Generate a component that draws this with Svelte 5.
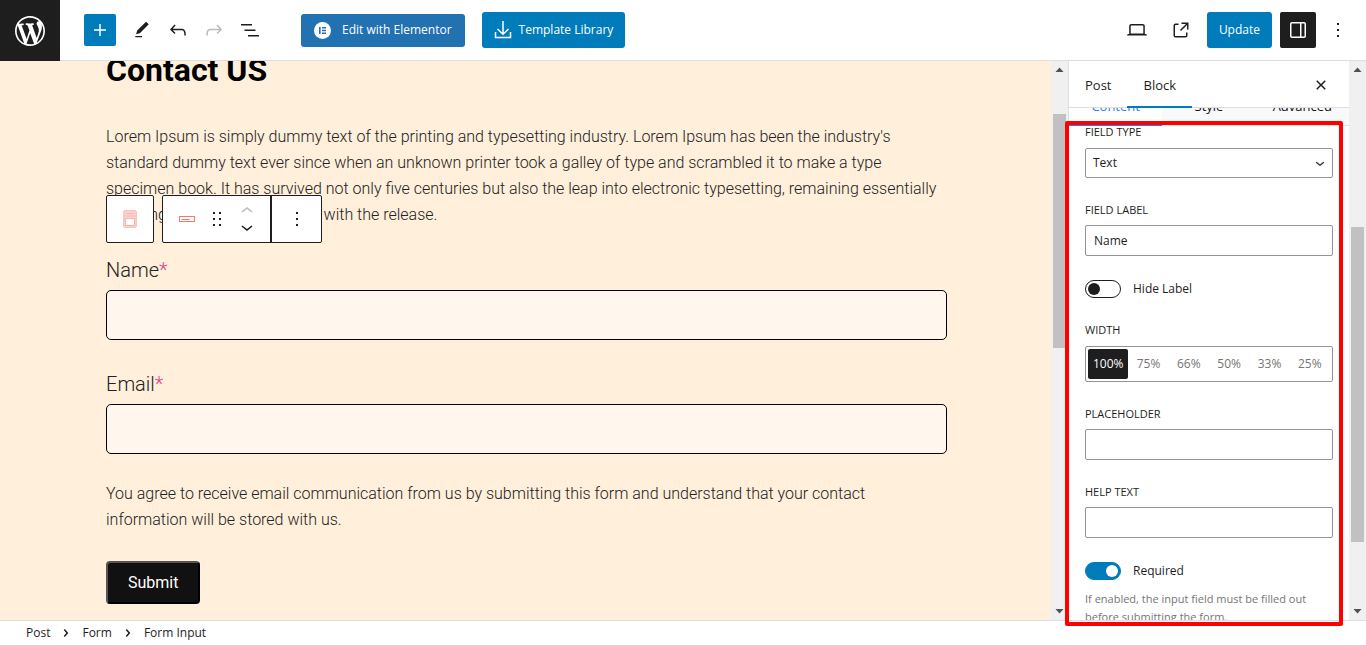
<script>
  const icons = {
    wordpress: 'M20 10c0-5.51-4.49-10-10-10C4.48 0 0 4.49 0 10c0 5.52 4.48 10 10 10 5.51 0 10-4.48 10-10zM7.78 15.37L4.37 6.22c.55-.02 1.17-.08 1.17-.08.5-.06.44-1.13-.06-1.11 0 0-1.45.11-2.37.11-.18 0-.37 0-.58-.01C4.12 2.69 6.87 1.11 10 1.11c2.33 0 4.45.87 6.05 2.34-.68-.11-1.65.39-1.65 1.58 0 .74.45 1.36.9 2.1.35.61.55 1.36.55 2.46 0 1.49-1.4 5-1.4 5l-3.03-8.37c.54-.02.82-.17.82-.17.5-.05.44-1.25-.06-1.22 0 0-1.44.12-2.38.12-.87 0-2.33-.12-2.33-.12-.5-.03-.56 1.2-.06 1.22l.92.08 1.26 3.41zM17.41 10c.24-.64.74-1.87.43-4.25.7 1.29 1.05 2.71 1.05 4.25 0 3.29-1.73 6.24-4.4 7.78.97-2.59 1.94-5.2 2.92-7.78zM6.1 18.09C3.12 16.65 1.11 13.53 1.11 10c0-1.3.23-2.48.72-3.59C3.25 10.3 4.67 14.2 6.1 18.09zm4.03-6.63l2.58 6.98c-.86.29-1.76.45-2.71.45-.79 0-1.57-.11-2.29-.33.81-2.38 1.62-4.74 2.42-7.1z',
    plus: 'M11.25 12.75V18H12.75V12.75H18V11.25H12.75V6H11.25V11.25H6V12.75H11.25Z',
    pencil: 'M20.1 5.1L16.9 2 6.2 12.7l-1.3 4.4 4.5-1.3L20.1 5.1zM4 20.8h8v-1.5H4v1.5z',
    undo: 'M18.3 11.7c-.6-.6-1.4-.9-2.3-.9H6.7l2.9-3.3-1.1-1-4.5 5L8.5 16l1-1-2.7-2.7H16c.5 0 .9.2 1.3.5 1 1 1 3.4 1 4.5v.3h1.5v-.2c0-1.5 0-4.3-1.5-5.7z',
    redo: 'M15.6 6.5l-1.1 1 2.9 3.3H8c-.9 0-1.7.3-2.3.9-1.4 1.5-1.4 4.2-1.4 5.6v.2h1.5v-.3c0-1.1 0-3.5 1-4.5.3-.3.7-.5 1.3-.5h9.2L14.5 15l1.1 1.1 4.6-4.6-4.6-5z',
    list: 'M3 6h11v1.5H3V6Zm3.5 5.5h11V13h-11v-1.5ZM21 17H10v1.5h11V17Z',
    laptop: 'M20.5 16h-.7V8c0-1.1-.9-2-2-2H6.2c-1.1 0-2 .9-2 2v8h-.7c-.8 0-1.5.7-1.5 1.5h20c0-.8-.7-1.5-1.5-1.5zM5.7 8c0-.3.2-.5.5-.5h11.6c.3 0 .5.2.5.5v7.6H5.7V8z',
    external: 'M19.5 4.5h-7V6h4.44l-5.97 5.97 1.06 1.06L18 7.06v4.44h1.5v-7Zm-13 1a2 2 0 0 0-2 2v10a2 2 0 0 0 2 2h10a2 2 0 0 0 2-2v-3H17v3a.5.5 0 0 1-.5.5h-10a.5.5 0 0 1-.5-.5v-10a.5.5 0 0 1 .5-.5h3V5.5h-3Z',
    drawer: 'M18 4H6c-1.1 0-2 .9-2 2v12c0 1.1.9 2 2 2h12c1.1 0 2-.9 2-2V6c0-1.1-.9-2-2-2zm-4 14.5H6c-.3 0-.5-.2-.5-.5V6c0-.3.2-.5.5-.5h8v13zm4.5-.5c0 .3-.2.5-.5.5h-2.5v-13H18c.3 0 .5.2.5.5v12z',
    more: 'M13 19h-2v-2h2v2zm0-6h-2v-2h2v2zm0-6h-2V5h2v2z',
    drag: 'M8 7h2V5H8v2zm0 6h2v-2H8v2zm0 6h2v-2H8v2zm6-14v2h2V5h-2zm0 8h2v-2h-2v2zm0 6h2v-2h-2v2z',
    up: 'M6.5 12.4L12 8l5.5 4.4-.9 1.2L12 10l-4.5 3.6-1-1.2z',
    down: 'M17.5 11.6L12 16l-5.5-4.4.9-1.2L12 14l4.5-3.6 1 1.2z',
    close: 'M12 13.06l3.712 3.713 1.061-1.06L13.061 12l3.712-3.712-1.06-1.06L12 10.938 8.288 7.227l-1.061 1.06L10.939 12l-3.712 3.712 1.06 1.061L12 13.061z',
    crumb: 'M10.8622 8.04053L14.2805 12.0286L10.8622 16.0167L9.72327 15.0405L12.3049 12.0286L9.72327 9.01672L10.8622 8.04053Z'
  };

  const widths = ['100%', '75%', '66%', '50%', '33%', '25%'];
  let width = $state('100%');
  let fieldLabel = $state('Name');
  let hideLabel = $state(false);
  let required = $state(true);
</script>

{#snippet icon(name, size = 24)}
  <svg width={size} height={size} viewBox={name === 'wordpress' ? '-2 -2 24 24' : '0 0 24 24'} fill="currentColor" aria-hidden="true"><path d={icons[name]} /></svg>
{/snippet}

{#snippet scrollbar(before, thumb, after)}
  <div class="scrollbar" aria-hidden="true">
    <svg width="17" height="17" viewBox="0 0 17 17"><path d="M8.5 6.5L12.5 11h-8z" fill="#505050" /></svg>
    <div style:flex-grow={before}></div>
    <div class="thumb" style:flex-grow={thumb}></div>
    <div style:flex-grow={after}></div>
    <svg width="17" height="17" viewBox="0 0 17 17"><path d="M8.5 10.5L12.5 6h-8z" fill="#505050" /></svg>
  </div>
{/snippet}

<div class="editor">
  <header>
    <a class="logo" href="#posts" aria-label="View posts">{@render icon('wordpress', 36)}</a>
    <div class="tools">
      <button class="add" aria-label="Add block">{@render icon('plus')}</button>
      <button class="tool" aria-label="Tools">{@render icon('pencil', 20)}</button>
      <button class="tool" aria-label="Undo">{@render icon('undo')}</button>
      <button class="tool" aria-label="Redo" disabled>{@render icon('redo')}</button>
      <button class="tool" aria-label="Document overview">{@render icon('list')}</button>
    </div>
    <button class="elementor">
      <svg width="17" height="17" viewBox="0 0 17 17" aria-hidden="true"><circle cx="8.5" cy="8.5" r="8.5" fill="#fff" /><path d="M5 5h1.6v7H5zM8 5h4v1.4H8zM8 7.8h4v1.4H8zM8 10.6h4V12H8z" fill="#2271b1" /></svg>
      Edit with Elementor
    </button>
    <button class="library">
      <svg width="18" height="18" viewBox="0 0 18 18" fill="none" stroke="#fff" stroke-width="1.5" aria-hidden="true"><path d="M1.5 11v5.5h15V11M9 0v13M3.5 8L9 13.2 14.5 8" /></svg>
      Template Library
    </button>
    <div class="settings">
      <button class="tool" aria-label="Preview">{@render icon('laptop')}</button>
      <button class="tool" aria-label="View post">{@render icon('external')}</button>
      <button class="update">Update</button>
      <button class="tool dark" aria-label="Settings">{@render icon('drawer')}</button>
      <button class="tool narrow" aria-label="Options">{@render icon('more')}</button>
    </div>
  </header>

  <div class="body">
    <main>
      <div class="post">
        <h1>Contact US</h1>
        <p class="intro">Lorem Ipsum is simply dummy text of the printing and typesetting industry. Lorem Ipsum has been the industry's standard dummy text ever since when an unknown printer took a galley of type and scrambled it to make a type specimen book. It has survived not only five centuries but also the leap into electronic typesetting, remaining essentially unchanged. It was popularised with the release.</p>
        <form onsubmit={(e) => e.preventDefault()}>
          <div class="toolbar" role="toolbar" aria-label="Block tools">
            <button type="button" class="parent" aria-label="Select Form">
              <svg width="14" height="18" viewBox="0 0 14 18" fill="#fdd5cf" stroke="#fbb4aa" aria-hidden="true"><rect x=".75" y=".75" width="12.5" height="16.5" rx="1" /><path d="M3 3.5h8M2 6h10" /><rect x="2.5" y="8.5" width="9" height="7" fill="#fff" /></svg>
            </button>
            <div class="group">
              <button type="button" aria-label="Form Input">
                <svg width="16" height="6" viewBox="0 0 16 6" fill="none" stroke="#ff7666" aria-hidden="true"><rect x=".5" y=".5" width="15" height="5" /><path d="M2.5 3.5h8" /></svg>
              </button>
              <button type="button" aria-label="Drag">{@render icon('drag')}</button>
              <div class="movers">
                <button type="button" aria-label="Move up" disabled>{@render icon('up')}</button>
                <button type="button" aria-label="Move down">{@render icon('down')}</button>
              </div>
              <button type="button" class="options" aria-label="Options">{@render icon('more')}</button>
            </div>
          </div>
          <div class="entry">
            <label for="name">Name<span>*</span></label>
            <input id="name" type="text" />
          </div>
          <div class="entry">
            <label for="email">Email<span>*</span></label>
            <input id="email" type="email" />
          </div>
          <p>You agree to receive email communication from us by submitting this form and understand that your contact information will be stored with us.</p>
          <button class="submit">Submit</button>
        </form>
      </div>
    </main>
    {@render scrollbar(36, 234, 255)}

    <aside>
      <div class="panel">
        <div class="tabs">
          <button>Post</button>
          <button class="current">Block</button>
          <button class="close" aria-label="Close settings">{@render icon('close')}</button>
        </div>
        <div class="scroll">
          <div class="subtabs">
            <button class="current">Content</button>
            <button>Style</button>
            <button>Advanced</button>
          </div>
          <div class="fields">
            <div class="control">
              <label for="type">FIELD TYPE</label>
              <div class="select">
                <select id="type"><option>Text</option></select>
                {@render icon('down', 18)}
              </div>
            </div>
            <div class="control text">
              <label for="field-label">FIELD LABEL</label>
              <input id="field-label" type="text" bind:value={fieldLabel} />
            </div>
            <label class="toggle"><input type="checkbox" role="switch" bind:checked={hideLabel} />Hide Label</label>
            <div class="control">
              <span class="caption" id="width-caption">WIDTH</span>
              <div class="segments" role="group" aria-labelledby="width-caption">
                {#each widths as w}
                  <button class:on={w === width} onclick={() => (width = w)}>{w}</button>
                {/each}
              </div>
            </div>
            <div class="control text">
              <label for="placeholder">PLACEHOLDER</label>
              <input id="placeholder" type="text" />
            </div>
            <div class="control text">
              <label for="help">HELP TEXT</label>
              <input id="help" type="text" />
            </div>
            <div>
              <label class="toggle"><input type="checkbox" role="switch" bind:checked={required} />Required</label>
              <p class="hint">If enabled, the input field must be filled out before submitting the form.</p>
            </div>
          </div>
        </div>
        <div class="highlight"></div>
      </div>
      {@render scrollbar(149, 315, 61)}
    </aside>
  </div>

  <footer>
    <a href="#post">Post</a>{@render icon('crumb')}<a href="#form">Form</a>{@render icon('crumb')}<a class="here" href="#input">Form Input</a>
  </footer>
</div>

<style>
  :global(body) { margin: 0; }
  * { box-sizing: border-box; }
  .editor {
    display: flex;
    flex-direction: column;
    height: 100vh;
    overflow: hidden;
    background: #fff;
    color: #1e1e1e;
    font: 12px/18px "Open Sans", "Noto Sans", sans-serif;
  }
  button, input, select { font: inherit; color: inherit; margin: 0; }
  button { display: flex; align-items: center; justify-content: center; padding: 0; border: 0; background: none; white-space: nowrap; }
  svg { display: block; flex: none; }
  p, h1 { margin: 0; }
  a { color: inherit; text-decoration: none; }

  header { display: flex; flex: none; align-items: center; height: 61px; border-bottom: 1px solid #dddee1; }
  .logo { display: flex; align-items: center; justify-content: center; align-self: flex-start; flex: none; width: 60px; height: 61px; background: #1e1e1e; color: #fff; }
  .tools { display: flex; align-items: center; margin: 0 33px 0 24px; }
  .add { width: 32px; height: 32px; margin-right: 8px; border-radius: 2px; background: #007cba; color: #fff; }
  .tool { width: 36px; height: 36px; border-radius: 2px; }
  button:disabled { color: #bbb; }
  .elementor, .library, .update { border-radius: 3px; background: #007cba; color: #fff; }
  .elementor { gap: 11px; height: 33px; padding: 0 13px; background: #2271b1; }
  .library { gap: 7px; height: 36px; margin-left: 17px; padding: 0 12px; font-weight: 500; }
  .settings { display: flex; align-items: center; gap: 8px; margin-left: auto; padding-right: 16px; }
  .update { height: 36px; padding: 0 12px; }
  .dark { background: #1e1e1e; color: #fff; }
  .narrow { width: 24px; margin-left: 2px; }

  .body { display: flex; flex: 1; min-height: 0; }
  main { flex: 1; min-width: 0; overflow: hidden; background: #ffefdb; color: #222; font: 300 16px/26px Roboto, sans-serif; }
  .post { margin-top: -10px; padding: 0 104px 0 106px; }
  h1 { margin-bottom: 35px; color: #000; font-size: 32px; line-height: 38px; font-weight: 700; }
  .intro { margin-bottom: 29px; }
  form { position: relative; }
  .entry { display: flex; flex-direction: column; gap: 7px; margin-bottom: 31px; }
  .entry label { font-size: 20px; }
  .entry span { color: #e83e8c; }
  .entry input { height: 50px; padding: 0 12px; border: 1px solid #000; border-radius: 5px; background: #fff7ee; }
  form p { margin: -4px 0 28px; }
  .submit { height: 43px; padding: 0 20px; border: 2px outset #000; border-radius: 4px; background: #111; color: #fff; font-weight: 400; }
  .toolbar { position: absolute; left: 0; bottom: 100%; display: flex; gap: 8px; margin-bottom: 14px; }
  .parent, .group { height: 48px; border: 1px solid #1e1e1e; border-radius: 2px; background: #fff; color: #1e1e1e; }
  .parent { width: 48px; }
  .group { display: flex; align-items: center; }
  .group > button { width: 24px; height: 46px; }
  .group > button:first-child { width: 42px; padding-left: 6px; }
  .group > .options { width: 51px; margin-left: 5px; border-left: 2px solid #1e1e1e; }
  .movers { width: 36px; }
  .movers button { width: 36px; height: 16px; overflow: hidden; }

  .scrollbar { display: flex; flex: none; flex-direction: column; width: 17px; background: #f0f0f0; }
  .thumb { margin: 0 2px; background: #c1c1c1; }

  aside { display: flex; flex: none; }
  .panel { position: relative; display: flex; flex-direction: column; width: 281px; border-left: 1px solid #dddee1; }
  .tabs { display: flex; flex: none; height: 47px; border-bottom: 1px solid #ddd; font-size: 13px; }
  .tabs button { height: 47px; padding: 0 16px; }
  .tabs .current { box-shadow: inset 0 -2px #007cba; }
  .tabs .close { width: 24px; margin-left: auto; margin-right: 16px; padding: 0; }
  .scroll { flex: 1; min-height: 0; overflow: hidden; }
  .subtabs { display: grid; grid-template-columns: repeat(3, 1fr); height: 40px; margin-top: -22px; background: #f9f9fc; border-bottom: 1px solid #e2e4e7; font-size: 13px; }
  .subtabs button { height: 40px; color: #111; }
  .subtabs .current { background: #fff; color: #2f7cf6; border-bottom: 1px solid #2f7cf6; }
  .fields { display: flex; flex-direction: column; gap: 24px; margin-top: -2px; padding: 0 16px; }
  .control { display: flex; flex-direction: column; gap: 8px; }
  .text { gap: 7px; }
  .control > label, .caption { font-size: 11px; line-height: 16px; }
  .control > input { height: 31px; padding: 0 8px; border: 1px solid #949494; border-radius: 2px; background: #fff; }
  .select { display: flex; align-items: center; height: 30px; padding-right: 3px; border: 1px solid #949494; border-radius: 2px; }
  .select select { flex: 1; height: 100%; padding: 0 7px; border: 0; appearance: none; background: none; }
  .toggle { display: flex; align-items: center; gap: 12px; }
  .toggle input { appearance: none; width: 36px; height: 18px; padding: 2px; border: 1px solid #1e1e1e; border-radius: 9px; background: #fff; }
  .toggle input::before { content: ""; display: block; width: 12px; height: 12px; border-radius: 50%; background: #1e1e1e; }
  .toggle input:checked { border-color: #007cba; background: #007cba; }
  .toggle input:checked::before { margin-left: auto; background: #fff; }
  .segments { display: grid; grid-template-columns: repeat(6, 1fr); height: 36px; padding: 2px; border: 1px solid #949494; border-radius: 2px; }
  .segments button { border-radius: 2px; color: #757575; }
  .segments .on { background: #1e1e1e; color: #fff; }
  .hint { margin-top: 10px; color: #757575; font-size: 11px; }
  .highlight { position: absolute; z-index: 2; top: 60px; right: 6px; bottom: -6px; left: -4px; border: 4px solid #f00; border-radius: 2px; pointer-events: none; }

  footer { display: flex; flex: none; align-items: center; height: 25px; padding: 0 26px; border-top: 1px solid #dddee1; gap: 4px; }
  .here { color: #1e1e1e; }
</style>
